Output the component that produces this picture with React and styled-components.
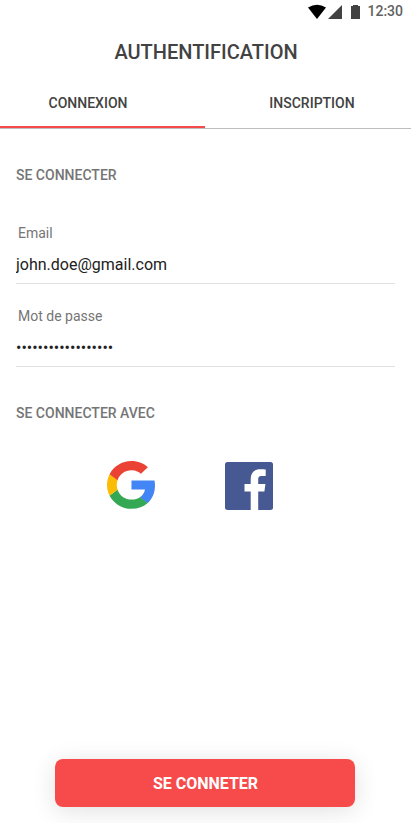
import React from "react";
import styled, { createGlobalStyle } from "styled-components";

const GlobalStyle = createGlobalStyle`
  *, *::before, *::after { box-sizing: border-box; }
  body {
    margin: 0;
    background: #fff;
    font-family: Roboto, sans-serif;
    overflow: hidden;
  }
`;

const Screen = styled.div`
  display: flex;
  flex-direction: column;
  width: 411px;
  height: 823px;
  background: #fff;
`;

const StatusBar = styled.div`
  display: flex;
  justify-content: flex-end;
  height: 24px;
  padding: 0 8px 0 0;
`;

const StatusIcons = styled.svg`
  display: block;
  width: 56px;
  height: 24px;
  margin-right: 3px;
`;

const Clock = styled.span`
  font-size: 14px;
  line-height: 16px;
  padding-top: 3px;
  font-weight: 500;
  color: #616161;
`;

const Title = styled.h1`
  margin: 0;
  height: 56px;
  padding-left: 1px;
  font-size: 20px;
  line-height: 56px;
  font-weight: 500;
  text-align: center;
  color: #424242;
`;

const Tabs = styled.nav`
  display: grid;
  grid-template-columns: 205px 206px;
  height: 49px;
  border-bottom: 1px solid #bdbdbd;
`;

const Tab = styled.button`
  border: 0;
  border-bottom: 2px solid ${(p) => (p.$active ? "#f74b4b" : "transparent")};
  background: none;
  padding: ${(p) => (p.$active ? "0 29px 0 0" : "0 0 0 8px")};
  font: 500 14px/46px Roboto, sans-serif;
  color: #424242;
`;

const Form = styled.main`
  display: flex;
  flex-direction: column;
  flex: 1;
  padding: 0 16px;
`;

const SectionTitle = styled.h2`
  margin: ${(p) => p.$top}px 0 0;
  font-size: 14px;
  line-height: 20px;
  font-weight: 500;
  color: #757575;
`;

const Field = styled.label`
  display: flex;
  flex-direction: column;
  height: 83px;
  border-bottom: 1px solid #e0e0e0;
`;

const Fields = styled.div`
  margin-top: 16px;
`;

const FieldLabel = styled.span`
  padding: 22px 0 0 2px;
  font-size: 14px;
  line-height: 20px;
  color: #757575;
`;

const FieldInput = styled.input`
  width: 100%;
  height: 24px;
  margin-top: 10px;
  padding: 0;
  border: 0;
  outline: 0;
  background: none;
  font: 400 16px/24px Roboto, sans-serif;
  color: #212121;
`;

const Providers = styled.div`
  display: flex;
  gap: 70px;
  padding: 38px 0 0 91px;
`;

const Provider = styled.button`
  width: 48px;
  height: 48px;
  margin-top: ${(p) => p.$drop || 0}px;
  padding: 0;
  border: 0;
  background: none;

  svg {
    display: block;
    width: 48px;
    height: 48px;
  }
`;

const Footer = styled.footer`
  display: flex;
  padding: 0 0 16px 55px;
`;

const Submit = styled.button`
  width: 300px;
  height: 48px;
  border: 0;
  border-radius: 8px;
  background: #f74b4b;
  box-shadow: 0 4px 24px rgba(0, 0, 0, 0.12);
  font: 700 16px/46px Roboto, sans-serif;
  color: #fff;
  padding: 2px 0 0 1px;
`;

function GoogleLogo() {
  return (
    <svg viewBox="0 0 256 262" preserveAspectRatio="none" aria-label="Google">
      <path fill="#4285F4" d="M255.878 133.451c0-10.734-.871-18.567-2.756-26.69H130.55v48.448h71.947c-1.45 12.04-9.283 30.172-26.69 42.356l-.244 1.622 38.755 30.023 2.685.268c24.659-22.774 38.875-56.282 38.875-96.027" />
      <path fill="#34A853" d="M130.55 261.1c35.248 0 64.839-11.605 86.453-31.622l-41.196-31.913c-11.024 7.688-25.82 13.055-45.257 13.055-34.523 0-63.824-22.773-74.269-54.25l-1.531.13-40.298 31.187-.527 1.465C35.393 231.798 79.49 261.1 130.55 261.1" />
      <path fill="#FBBC05" d="M56.281 156.37c-2.756-8.123-4.351-16.827-4.351-25.82 0-8.994 1.595-17.697 4.206-25.82l-.073-1.73L15.26 71.312l-1.335.635C5.077 89.644 0 109.517 0 130.55s5.077 40.905 13.925 58.602l42.356-32.782" />
      <path fill="#EA4335" d="M130.55 50.479c24.514 0 41.05 10.589 50.479 19.438l36.844-35.974C195.245 12.91 165.798 0 130.55 0 79.49 0 35.393 29.301 13.925 71.947l42.211 32.783c10.59-31.477 39.891-54.251 74.414-54.251" />
    </svg>
  );
}

function FacebookLogo() {
  return (
    <svg viewBox="0 0 48 48" aria-label="Facebook">
      <rect width="48" height="48" rx="2.5" fill="#475993" />
      <path fill="#fff" d="M33.2 48V29.4h6.2l1-7.3h-7.2v-4.6c0-2.1.6-3.5 3.6-3.5h3.9V7.5c-.7-.1-3-.3-5.6-.3-5.6 0-9.4 3.4-9.4 9.6v5.3h-6.2v7.3h6.2V48z" />
    </svg>
  );
}

export default function App() {
  return (
    <>
      <GlobalStyle />
      <Screen>
        <StatusBar>
          <StatusIcons viewBox="308 0 56 24" aria-hidden="true">
            <path fill="#000" d="M308 7.6Q317 1.9 326 7.6L317 19z" />
            <path fill="#424242" d="M328 19L342 5V19z" />
            <path fill="#424242" d="M351 6h2V5h5v1h2V19h-9z" />
          </StatusIcons>
          <Clock>12:30</Clock>
        </StatusBar>
        <Title>AUTHENTIFICATION</Title>
        <Tabs>
          <Tab $active>CONNEXION</Tab>
          <Tab>INSCRIPTION</Tab>
        </Tabs>
        <Form>
          <SectionTitle $top={36}>SE CONNECTER</SectionTitle>
          <Fields>
            <Field>
              <FieldLabel>Email</FieldLabel>
              <FieldInput type="text" defaultValue="john.doe@gmail.com" />
            </Field>
            <Field>
              <FieldLabel>Mot de passe</FieldLabel>
              <FieldInput type="text" defaultValue="••••••••••••••••••" />
            </Field>
          </Fields>
          <SectionTitle $top={36}>SE CONNECTER AVEC</SectionTitle>
          <Providers>
            <Provider><GoogleLogo /></Provider>
            <Provider $drop={1}><FacebookLogo /></Provider>
          </Providers>
        </Form>
        <Footer>
          <Submit>SE CONNETER</Submit>
        </Footer>
      </Screen>
    </>
  );
}
